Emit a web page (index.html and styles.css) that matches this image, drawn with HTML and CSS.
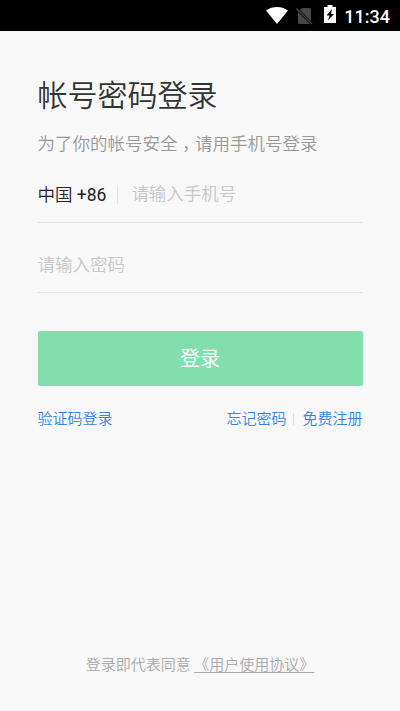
FILE: index.html
```html
<!DOCTYPE html>
<html lang="zh-CN">
<head>
<meta charset="utf-8">
<title>帐号密码登录</title>
<link rel="stylesheet" href="styles.css">
</head>
<body>
<header class="status">
<svg class="wifi" viewBox="0 0 22 17"><path d="M0 3.5C6.5-1.1 15.5-1.1 22 3.5L11 17Z"/></svg>
<svg class="sim" viewBox="0 0 18 18"><path d="M6 1h7.5q1.5 0 1.5 1.5v11.5L4 3zM2 5l12 12H3.5Q2 17 2 15.5z"/><path class="slash" d="M.5 1.5l15.5 15.5"/></svg>
<svg class="battery" viewBox="0 0 12 18"><path d="M3.5 0h5v2H12v16H0V2h3.5z"/><path class="bolt" d="M8 4L2.5 10.5H5.5L4 15.5L10 9H7z"/></svg>
<time>11:34</time>
</header>
<main class="login">
<h1>帐号密码登录</h1>
<p class="hint">为了你的帐号安全<span class="comma">，</span>请用手机号登录</p>
<div class="field phone"><span class="country">中国 <span class="code">+86</span></span><span class="placeholder">请输入手机号</span></div>
<div class="field password"><span class="placeholder">请输入密码</span></div>
<button class="submit">登录</button>
<nav class="links"><a>验证码登录</a><span class="right"><a>忘记密码</a><i></i><a>免费注册</a></span></nav>
</main>
<footer>登录即代表同意 <a>《用户使用协议》</a></footer>
</body>
</html>
```
FILE: styles.css
```css
* { box-sizing: border-box; }
body { margin: 0; height: 711px; display: flex; flex-direction: column; background: #f8f8f8; font-family: Roboto, "Noto Sans CJK SC", sans-serif; font-weight: 350; overflow: hidden; }
.status { height: 31px; background: #000; color: #fff; display: flex; justify-content: flex-end; padding-right: 10px; flex: none; }
.status svg { fill: #fff; flex: none; }
.wifi { width: 22px; height: 17px; margin-top: 7px; }
.status .sim { width: 18px; height: 18px; margin: 7px 0 0 8px; fill: #484848; }
.slash { stroke: #484848; stroke-width: 1.5; }
.battery { width: 12px; height: 18px; margin: 5px 0 0 10px; }
.bolt { fill: #000; }
time { font-size: 18px; font-weight: 500; line-height: 33px; margin-left: 8px; }
.login { flex: 1; padding: 0 37.5px; }
h1 { margin: 43px 0 0; font-size: 30px; font-weight: 350; line-height: 44px; color: #333; white-space: nowrap; }
.hint { margin: 13px 0 0; font-size: 17.5px; line-height: 26px; color: #999; white-space: nowrap; }
.comma { display: inline-block; width: 1em; padding-left: .25em; font-feature-settings: "halt"; }
.field { border-bottom: 1px solid #e2e2e2; display: flex; align-items: center; font-size: 17.5px; white-space: nowrap; }
.phone { margin-top: 10px; height: 56px; }
.country { color: #222; line-height: 18px; padding-top: 1px; padding-right: 11px; border-right: 1px solid #e2e2e2; }
.code { font-weight: 400; }
.placeholder { color: #c7c7c7; }
.phone .placeholder { margin-left: 13px; padding-bottom: 4px; }
.password { margin-top: 14px; height: 56px; padding-bottom: 3px; }
.submit { display: block; width: 325px; height: 55px; margin-top: 38px; border: 0; border-radius: 2px; padding: 0 0 2px; background: #82dfad; color: #fff; font: 350 20px "Noto Sans CJK SC", sans-serif; }
.links { display: flex; justify-content: space-between; margin-top: 21px; font-size: 15px; line-height: 24px; color: #3285e8; }
.right { display: flex; align-items: center; }
.right i { width: 1px; height: 12px; margin: 0 8px 0 7px; background: #ddd; }
footer { text-align: center; font-size: 15px; line-height: 22px; color: #aaa; margin-bottom: 35px; white-space: nowrap; }
footer a { text-decoration: underline; text-underline-offset: 2px; }
```
